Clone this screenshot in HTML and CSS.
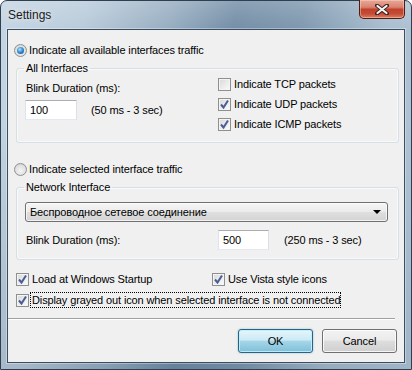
FILE: index.html
```html
<!DOCTYPE html>
<html>
<head>
<meta charset="utf-8">
<link rel="stylesheet" href="styles.css">
</head>
<body>
<div class="window">
  <div class="titlebar">
    <span class="title">Settings</span>
    <div class="close">
      <svg width="14" height="11" viewBox="0 0 14 11">
        <path d="M2 1.5 L12 9.5 M12 1.5 L2 9.5" stroke="#3b2420" stroke-width="4" stroke-linecap="round"/>
        <path d="M2.5 2 L11.5 9 M11.5 2 L2.5 9" stroke="#f4f4f4" stroke-width="2.2" stroke-linecap="round"/>
      </svg>
    </div>
  </div>
  <div class="client">
    <div class="opt-row first">
      <span class="radio checked"></span><span>Indicate all available interfaces traffic</span>
    </div>
    <fieldset class="group g1">
      <legend>All Interfaces</legend>
      <div class="g1-body">
        <div class="col-left">
          <div class="lbl">Blink Duration (ms):</div>
          <div class="input-row">
            <div class="textbox tb1">100</div>
            <span class="range">(50 ms - 3 sec)</span>
          </div>
        </div>
        <div class="col-right">
          <div class="chk-row"><span class="chk"></span><span>Indicate TCP packets</span></div>
          <div class="chk-row"><span class="chk on"><svg width="11" height="11" viewBox="0 0 11 11"><path d="M2 5.5 L4.5 8.5 L9 1.5" fill="none" stroke="#4a5d94" stroke-width="2"/></svg></span><span>Indicate UDP packets</span></div>
          <div class="chk-row"><span class="chk on"><svg width="11" height="11" viewBox="0 0 11 11"><path d="M2 5.5 L4.5 8.5 L9 1.5" fill="none" stroke="#4a5d94" stroke-width="2"/></svg></span><span>Indicate ICMP packets</span></div>
        </div>
      </div>
    </fieldset>
    <div class="opt-row second">
      <span class="radio"></span><span>Indicate selected interface traffic</span>
    </div>
    <fieldset class="group g2">
      <legend>Network Interface</legend>
      <div class="combo">
        <span>Беспроводное сетевое соединение</span>
        <span class="arrow"></span>
      </div>
      <div class="blink-row">
        <span class="lbl2">Blink Duration (ms):</span>
        <div class="textbox tb2">500</div>
        <span class="range2">(250 ms - 3 sec)</span>
      </div>
    </fieldset>
    <div class="bottom-row">
      <div class="chk-row wide"><span class="chk on"><svg width="11" height="11" viewBox="0 0 11 11"><path d="M2 5.5 L4.5 8.5 L9 1.5" fill="none" stroke="#4a5d94" stroke-width="2"/></svg></span><span>Load at Windows Startup</span></div>
      <div class="chk-row"><span class="chk on"><svg width="11" height="11" viewBox="0 0 11 11"><path d="M2 5.5 L4.5 8.5 L9 1.5" fill="none" stroke="#4a5d94" stroke-width="2"/></svg></span><span>Use Vista style icons</span></div>
    </div>
    <div class="chk-row last"><span class="chk on"><svg width="11" height="11" viewBox="0 0 11 11"><path d="M2 5.5 L4.5 8.5 L9 1.5" fill="none" stroke="#4a5d94" stroke-width="2"/></svg></span><span class="focus">Display grayed out icon when selected interface is not connected</span></div>
    <div class="separator"></div>
    <div class="buttons">
      <div class="btn ok">OK</div>
      <div class="btn cancel">Cancel</div>
    </div>
  </div>
</div>
</body>
</html>
```
FILE: styles.css
```css
html, body {
  margin: 0;
  padding: 0;
  background: #ffffff;
}

.window {
  width: 412px;
  height: 370px;
  box-sizing: border-box;
  border: 1px solid #2e3f50;
  border-radius: 7px 7px 0 0;
  padding: 0 6px 6px 6px;
  display: flex;
  flex-direction: column;
  font-family: "Liberation Sans", Arial, sans-serif;
  font-size: 11px;
  line-height: 14px;
  letter-spacing: -0.12px;
  color: #000;
  background:
    linear-gradient(to bottom, rgba(255,255,255,0.18) 0px, rgba(255,255,255,0) 30px, rgba(0,0,0,0) 120px, rgba(20,40,60,0.12) 370px),
    linear-gradient(100deg, #c5d5e3 0%, #b9cbda 18%, #97adc1 36%, #728da6 50%, #7d97ae 64%, #a9bdcf 82%, #b3c8da 100%);
}

.titlebar {
  height: 28px;
  display: flex;
  justify-content: space-between;
  align-items: flex-start;
  flex-shrink: 0;
}

.title {
  font-size: 12px;
  line-height: 16px;
  letter-spacing: 0;
  padding: 6px 0 0 1px;
  color: #1a1a1a;
  text-shadow: 0 0 6px rgba(255,255,255,0.8);
}

.close {
  width: 46px;
  height: 19px;
  box-sizing: border-box;
  margin-top: -1px;
  border: 1px solid #4d1d14;
  border-top: none;
  border-radius: 0 0 5px 5px;
  background: linear-gradient(to bottom, #e8a898 0%, #d98372 40%, #c2412b 52%, #c34a34 75%, #e07a60 100%);
  box-shadow: inset 0 0 0 1px rgba(255,220,200,0.45);
  display: flex;
  align-items: center;
  justify-content: center;
}

.client {
  flex: 1;
  background: #f0f0f0;
  border: 1px solid #3a4e62;
  box-shadow: 0 0 0 1px rgba(255,255,255,0.35);
  display: flex;
  flex-direction: column;
  padding: 0 5px 0 6px;
}

.opt-row {
  display: flex;
  align-items: center;
  height: 16px;
  gap: 2px;
}

.opt-row.first { margin-top: 12px; }
.opt-row.second { margin-top: 18px; }

.radio {
  width: 13px;
  height: 13px;
  box-sizing: border-box;
  border-radius: 50%;
  border: 1px solid #8c9096;
  background: radial-gradient(circle at 50% 60%, #f4f4f4 0%, #e0e0e0 60%, #c8c8c8 100%);
  display: flex;
  align-items: center;
  justify-content: center;
  flex-shrink: 0;
}

.radio.checked::after {
  content: "";
  width: 7px;
  height: 7px;
  border-radius: 50%;
  background: radial-gradient(circle at 40% 35%, #bde6ff 0%, #4aa3e0 35%, #175a9c 80%, #0f3f70 100%);
}

.group {
  margin: 3px 0 0 2px;
  border: 1px solid #d5dfe5;
  border-radius: 3px;
  box-shadow: inset 0 0 0 1px rgba(255,255,255,0.6);
  min-width: 0;
}

.group legend {
  padding: 0 2px;
  margin-left: -2px;
  line-height: 14px;
}

.g1 {
  padding: 1px 0 10px 9px;
}

.g1-body {
  display: grid;
  grid-template-columns: 192px 1fr;
}

.col-left {
  display: flex;
  flex-direction: column;
}

.lbl {
  margin-top: 5px;
}

.input-row {
  display: flex;
  align-items: center;
  margin-top: 5px;
  margin-left: -1px;
}

.textbox {
  height: 20px;
  box-sizing: border-box;
  background: #fff;
  border: 1px solid #abadb3;
  border-color: #abadb3 #dbdfe6 #e3e9ef #e2e3ea;
  padding: 2px 0 0 4px;
  line-height: 14px;
}

.tb1 { width: 52px; }
.tb2 { width: 51px; }

.range { margin-left: 14px; }

.col-right {
  display: flex;
  flex-direction: column;
  gap: 4px;
}

.chk-row {
  display: flex;
  align-items: center;
  height: 16px;
  gap: 3px;
}

.chk {
  width: 13px;
  height: 13px;
  box-sizing: border-box;
  border: 1px solid #8e8f8f;
  background: linear-gradient(135deg, #d8d8d8 0%, #eeeeee 60%, #fbfbfb 100%);
  box-shadow: inset 0 0 0 1px #f4f4f4;
  display: flex;
  align-items: center;
  justify-content: center;
  flex-shrink: 0;
}

.g2 {
  padding: 0 10px 9px 9px;
}

.combo {
  margin-top: 8px;
  margin-left: -1px;
  height: 20px;
  box-sizing: border-box;
  border: 1px solid #707070;
  border-radius: 3px;
  background: linear-gradient(to bottom, #f6f6f6 0%, #ebebeb 48%, #dfdfdf 52%, #d3d3d3 100%);
  box-shadow: inset 0 0 0 1px rgba(255,255,255,0.7);
  display: flex;
  align-items: center;
  justify-content: space-between;
  padding: 0 6px 0 4px;
}

.arrow {
  width: 0;
  height: 0;
  border-left: 4px solid transparent;
  border-right: 4px solid transparent;
  border-top: 4px solid #000;
}

.blink-row {
  display: flex;
  align-items: center;
  margin-top: 8px;
}

.lbl2 { width: 192px; }
.range2 { margin-left: 15px; }

.bottom-row {
  display: flex;
  margin: 11px 0 0 2px;
}

.chk-row.wide { width: 196px; }

.chk-row.last {
  margin: 5px 0 0 2px;
}

.focus {
  outline: 1px dotted #000;
  outline-offset: 0;
  padding: 0 0 0 1px;
  margin-left: -1px;
}

.separator {
  height: 1px;
  background: #a0a0a0;
  margin: 10px 4px 0 -6px;
  box-shadow: 0 1px 0 #fff;
}

.buttons {
  display: flex;
  justify-content: flex-end;
  gap: 9px;
  margin: 10px 2px 0 0;
}

.btn {
  width: 75px;
  height: 24px;
  box-sizing: border-box;
  border-radius: 3px;
  display: flex;
  align-items: center;
  justify-content: center;
  font-size: 11px;
}

.btn.ok {
  border: 1px solid #2c6281;
  background: linear-gradient(to bottom, #e6f6fb 0%, #cdeaf5 45%, #a4d5e8 52%, #7fbfd8 100%);
  box-shadow: inset 0 0 0 1px rgba(190,240,255,0.9), 0 0 2px rgba(60,160,200,0.6);
}

.btn.cancel {
  border: 1px solid #707070;
  background: linear-gradient(to bottom, #f2f2f2 0%, #ebebeb 45%, #dddddd 52%, #cfcfcf 100%);
  box-shadow: inset 0 0 0 1px rgba(255,255,255,0.8);
}
```
